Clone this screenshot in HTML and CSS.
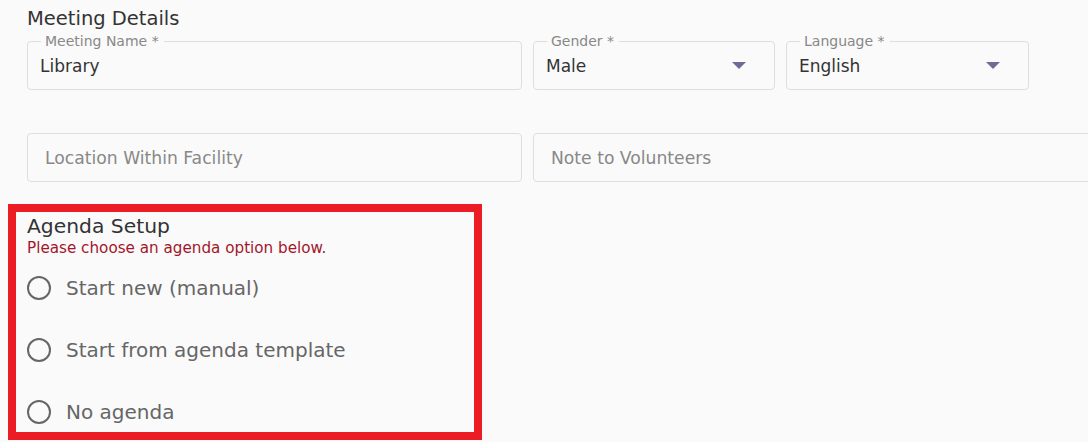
FILE: index.html
```html
<!DOCTYPE html>
<html>
<head>
  <meta charset='utf-8'>
  <meta name='viewport' content='width=device-width, initial-scale=1.0'>
  <title>Meeting Details</title>
  <link rel="stylesheet" href="styles.css">
</head>
<body>
  <div class='page'>
    <h3 class='title'>Meeting Details</h3>
    <div class='row row-top'>
      <div class='field'>
        <span class='label'>Meeting Name *</span>
        <span class='value'>Library</span>
      </div>
      <div class='field select'>
        <span class='label'>Gender *</span>
        <span class='value'>Male</span>
        <span class='caret'></span>
      </div>
      <div class='field select'>
        <span class='label'>Language *</span>
        <span class='value'>English</span>
        <span class='caret'></span>
      </div>
    </div>
    <div class='row row-bottom'>
      <div class='field'>
        <span class='placeholder'>Location Within Facility</span>
      </div>
      <div class='field'>
        <span class='placeholder'>Note to Volunteers</span>
      </div>
    </div>
  </div>

  <div class='agenda'>
    <h3 class='title title-agenda'>Agenda Setup</h3>
    <p class='error'>Please choose an agenda option below.</p>
    <label class='option'><span class='radio'></span>Start new (manual)</label>
    <label class='option'><span class='radio'></span>Start from agenda template</label>
    <label class='option'><span class='radio'></span>No agenda</label>
  </div>
</body>
</html>
```

FILE: styles.css
```css
*{box-sizing: border-box;}

body {
  margin: 0;
  background-color: #fafafa;
  font-family: "DejaVu Sans", "Open Sans", sans-serif;
  color: #333;
  overflow: hidden;
}

.page {
  padding: 8px 0 0 27px;
}

.title {
  font-size: 19.5px;
  font-weight: 400;
  line-height: 22px;
  margin: 0;
  color: #333;
}

.title-agenda {
  font-size: 20.3px;
}

.row {
  display: grid;
  gap: 11px;
}

.row-top {
  margin-top: 11px;
  grid-template-columns: 495px 242px 243px;
}

.row-bottom {
  margin-top: 43px;
  grid-template-columns: 495px 600px;
}

.field {
  position: relative;
  height: 49px;
  border: 1px solid #dedede;
  border-radius: 4px;
  display: flex;
  align-items: center;
  padding: 0 12px;
}

/* floating label that sits on the top border */
.field .label {
  position: absolute;
  top: -9px;
  left: 13px;
  padding: 0 5px 0 4px;
  background-color: #fafafa;
  font-size: 14px;
  line-height: 17px;
  color: #888;
}

.value {
  font-size: 17px;
  color: #333;
}

.placeholder {
  font-size: 17.2px;
  color: #888;
  padding-left: 5px;
}

.select .caret {
  margin-left: auto;
  margin-right: 16px;
  width: 0;
  height: 0;
  border-left: 7px solid transparent;
  border-right: 7px solid transparent;
  border-top: 7px solid #6c6c98;
}

.agenda {
  margin: 22px 0 0 8px;
  width: 474px;
  height: 236px;
  border: 8px solid #ec1c24;
  padding: 3px 0 0 11px;
}

.error {
  margin: 2px 0 0;
  font-size: 15.2px;
  line-height: 18px;
  color: #a3162a;
}

.option {
  display: flex;
  align-items: center;
  gap: 15px;
  font-size: 20px;
  color: #666;
  height: 62px;
}

.radio {
  width: 24px;
  height: 24px;
  border: 2.5px solid #666;
  border-radius: 50%;
}
```
